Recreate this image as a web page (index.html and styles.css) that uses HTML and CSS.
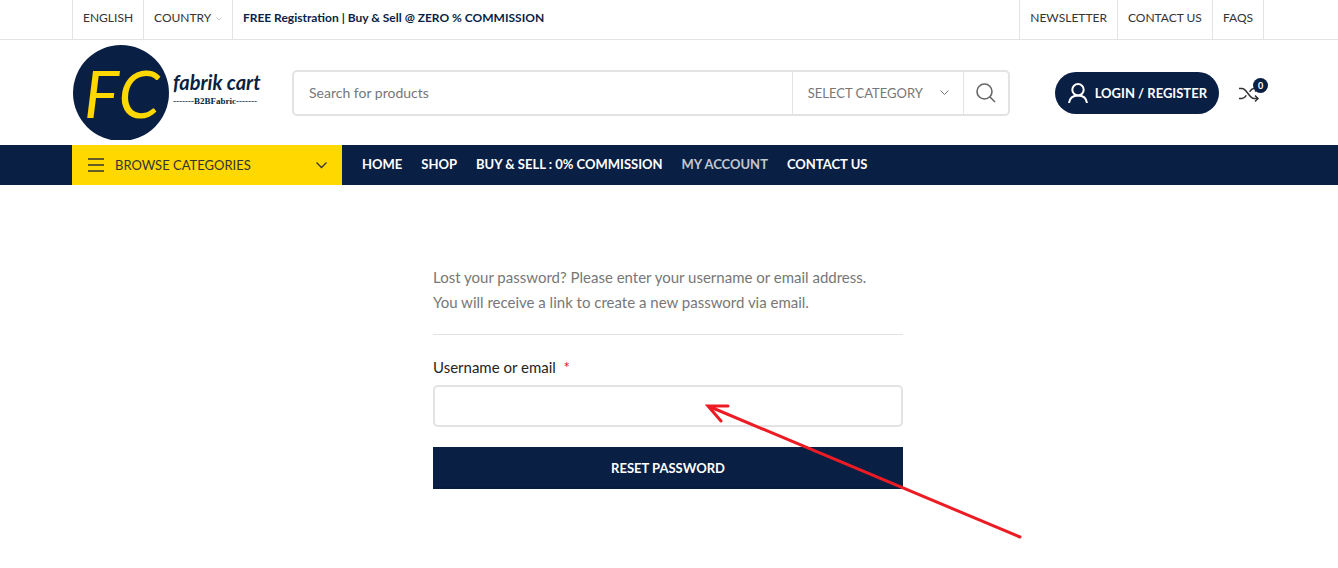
FILE: index.html
```html
<!DOCTYPE html>
<html lang="en">
<head>
  <meta charset="UTF-8">
  <meta name="viewport" content="width=device-width, initial-scale=1">
  <title>Lost password - Fabrik Cart</title>
  <link rel="stylesheet" href="styles.css">
</head>
<body>
  <div class="topbar">
    <div class="container topbar-row">
      <ul class="top-menu">
        <li><a href="#">ENGLISH</a></li>
        <li><a href="#">COUNTRY
          <svg class="top-chevron" viewBox="0 0 6 4"><path d="M0.5 0.5 L3 3 L5.5 0.5"/></svg></a></li>
        <li class="top-text">FREE Registration | Buy &amp; Sell @ ZERO % COMMISSION</li>
      </ul>
      <ul class="top-menu top-right">
        <li><a href="#">NEWSLETTER</a></li>
        <li><a href="#">CONTACT US</a></li>
        <li><a href="#">FAQS</a></li>
      </ul>
    </div>
  </div>

  <header class="header">
    <div class="container header-row">
      <a href="#" class="logo" aria-label="Fabrik Cart">
        <svg viewBox="0 0 200 95" width="200" height="95">
          <circle cx="49" cy="48" r="48" class="logo-circle"/>
          <text x="12" y="73" class="logo-fc">FC</text>
          <text x="101" y="45" class="logo-name">fabrik cart</text>
          <text x="101" y="59" class="logo-sub">-------B2BFabric-------</text>
        </svg>
      </a>

      <form class="search">
        <input type="text" class="search-input" placeholder="Search for products" aria-label="Search for products">
        <div class="search-cat">
          <select aria-label="Category">
            <option>SELECT CATEGORY</option>
          </select>
          <svg class="cat-chevron" viewBox="0 0 9 6"><path d="M0.5 0.5 L4.5 4.5 L8.5 0.5"/></svg>
        </div>
        <button type="button" class="search-btn" aria-label="Search">
          <svg viewBox="0 0 20 20" width="20" height="20"><circle cx="8.5" cy="8.5" r="7.5"/><path d="M13.8 13.8 L19 19"/></svg>
        </button>
      </form>

      <div class="header-tools">
        <a href="#" class="login-btn">
          <svg viewBox="0 0 20 20" width="20" height="20"><circle cx="10" cy="6.7" r="5.7"/><path d="M1 20 C1.6 15.2 5 12.4 10 12.4 C15 12.4 18.4 15.2 19 20"/></svg>
          LOGIN / REGISTER
        </a>
        <a href="#" class="compare" aria-label="Compare">
          <svg viewBox="0 0 20 16" width="20" height="16">
            <path d="M0 3.5 H3 C8 3.5 10 13.5 15 13.5 H19"/>
            <path d="M0 13.5 H3 C5 13.5 6.2 12 7.3 10.3 M10.5 6.7 C11.8 5 13 3.5 15 3.5 H19"/>
            <path d="M16 0.5 L19 3.5 L16 6.5 M16 10.5 L19 13.5 L16 16.5"/>
          </svg>
          <span class="badge">0</span>
        </a>
      </div>
    </div>
  </header>

  <div class="navbar">
    <div class="container nav-row">
      <button type="button" class="browse">
        <svg viewBox="0 0 16 14" width="16" height="14"><path d="M0 1 H16 M0 7 H16 M0 13 H16"/></svg>
        <span>BROWSE CATEGORIES</span>
        <svg viewBox="0 0 11 7" width="11" height="7"><path d="M0.5 0.5 L5.5 5.5 L10.5 0.5"/></svg>
      </button>
      <nav class="main-nav">
        <a href="#">HOME</a>
        <a href="#">SHOP</a>
        <a href="#">BUY &amp; SELL : 0% COMMISSION</a>
        <a href="#" class="active">MY ACCOUNT</a>
        <a href="#">CONTACT US</a>
      </nav>
    </div>
  </div>

  <main class="container content">
    <form class="reset-form">
      <p class="info">Lost your password? Please enter your username or email address.<br>You will receive a link to create a new password via email.</p>
      <label for="user_login">Username or email&nbsp; <span class="required">*</span></label>
      <input type="text" id="user_login" name="user_login">
      <button type="button" class="reset-btn">RESET PASSWORD</button>
      <!-- pointer to the email field -->
      <svg class="arrow" viewBox="0 0 320 140" width="320" height="140">
        <path d="M5 7 L317 138 M25 7 H5 L18 22"/>
      </svg>
    </form>
  </main>
</body>
</html>
```
FILE: styles.css
```css
* {
  box-sizing: border-box;
}

body {
  margin: 0;
  background: #fff;
  color: #777;
  font-family: Lato, "Liberation Sans", sans-serif;
  font-size: 15px;
}

a {
  color: inherit;
  text-decoration: none;
}

button,
input,
select {
  font-family: inherit;
}

svg {
  fill: none;
  stroke: currentColor;
}

.container {
  max-width: 1194px;
  margin: 0 auto;
  padding-right: 2px;
}

/* top bar */
.topbar {
  border-bottom: 1px solid #e3e3e3;
}

.topbar-row {
  display: flex;
  justify-content: space-between;
}

.top-menu {
  display: flex;
  list-style: none;
  margin: 0;
  padding: 0;
  color: #333;
  font-size: 12px;
  line-height: 36px;
}

.top-menu li {
  height: 39px;
  padding: 0 10px;
  border-left: 1px solid #e3e3e3;
  white-space: nowrap;
}

.top-menu .top-text {
  color: #0a1f44;
  font-weight: bold;
}

.top-right {
  border-right: 1px solid #e3e3e3;
}

.top-chevron {
  width: 6px;
  height: 4px;
  margin-left: 2px;
  vertical-align: middle;
  color: #ccc;
}

/* header */
.header-row {
  display: flex;
  align-items: center;
  height: 105px;
}

.logo {
  display: flex;
  width: 220px;
}

.logo-circle {
  fill: #0a1f44;
  stroke: none;
}

.logo text {
  stroke: none;
}

.logo-fc {
  fill: #ffd800;
  font-size: 66px;
  font-style: italic;
}

.logo-name {
  fill: #0a1f44;
  font-size: 20px;
  font-style: italic;
  font-weight: bold;
}

.logo-sub {
  fill: #0a1f44;
  font-family: "Liberation Serif", serif;
  font-size: 9px;
  font-weight: bold;
}

.search {
  display: flex;
  flex: 1;
  height: 46px;
  border: 2px solid #e3e3e3;
  border-radius: 5px;
}

.search-input {
  flex: 1;
  min-width: 0;
  padding: 0 15px;
  border: none;
  background: none;
  font-size: 14px;
}

.search-input::placeholder {
  color: #777;
}

.search-cat {
  display: flex;
  align-items: center;
  padding: 0 14px 0 15px;
  border-left: 1px solid #e3e3e3;
  border-right: 1px solid #e3e3e3;
}

.search-cat select {
  appearance: none;
  width: 132px;
  padding: 0;
  border: none;
  background: none;
  color: #777;
  font-size: 13px;
}

.cat-chevron {
  width: 9px;
  height: 6px;
}

.search-btn {
  display: flex;
  align-items: center;
  justify-content: center;
  width: 44px;
  padding: 0;
  border: none;
  background: none;
  color: #666;
  stroke-width: 1.6;
}

.header-tools {
  display: flex;
  align-items: center;
  gap: 20px;
  padding: 0 5px 0 45px;
}

.login-btn {
  display: flex;
  align-items: center;
  gap: 7px;
  height: 42px;
  padding: 0 12px 0 13px;
  border-radius: 21px;
  background: #0a1f44;
  color: #fff;
  font-size: 13px;
  font-weight: bold;
  white-space: nowrap;
}

.login-btn svg {
  stroke-width: 2px;
}

.compare {
  position: relative;
  display: flex;
  color: #333;
}

.compare svg {
  overflow: visible;
  stroke-width: 1.5;
}

.badge {
  position: absolute;
  top: -7px;
  right: -9px;
  width: 15px;
  height: 15px;
  border-radius: 50%;
  background: #0a1f44;
  color: #fff;
  font-size: 9px;
  font-weight: bold;
  line-height: 15px;
  text-align: center;
}

/* navigation */
.navbar {
  background: #0a1f44;
}

.nav-row {
  display: flex;
  height: 40px;
}

.browse {
  display: flex;
  align-items: center;
  gap: 11px;
  width: 270px;
  padding: 0 15px 0 16px;
  border: none;
  background: #ffd800;
  color: #333;
  font-size: 13px;
  stroke-width: 1.3;
}

.browse span {
  flex: 1;
  text-align: left;
}

.main-nav {
  display: flex;
  gap: 19px;
  padding-left: 20px;
  color: #fff;
  font-size: 13px;
  font-weight: bold;
  line-height: 38px;
  white-space: nowrap;
}

.main-nav .active {
  color: #c2c7d0;
}

/* lost password form */
.content {
  padding-top: 80px;
  padding-bottom: 72px;
}

.reset-form {
  position: relative;
  display: flex;
  flex-direction: column;
  max-width: 470px;
  margin: 0 auto;
}

.info {
  margin: 0 0 20px;
  padding-bottom: 19px;
  border-bottom: 1px solid #e3e3e3;
  line-height: 25px;
}

.reset-form label {
  margin-bottom: 5px;
  color: #242424;
  line-height: 25px;
}

.required {
  color: #e01020;
}

.reset-form input {
  height: 42px;
  margin-bottom: 20px;
  padding: 0 15px;
  border: 2px solid #e3e3e3;
  border-radius: 5px;
  font-size: 14px;
}

.reset-btn {
  height: 42px;
  border: none;
  background: #0a1f44;
  box-shadow: inset 0 -2px 0 #091c3d;
  color: #fff;
  font-size: 13px;
  font-weight: bold;
}

.arrow {
  position: absolute;
  top: 134px;
  left: 270px;
  color: #ed1c24;
  stroke-width: 3px;
  stroke-linecap: round;
  pointer-events: none;
}
```
